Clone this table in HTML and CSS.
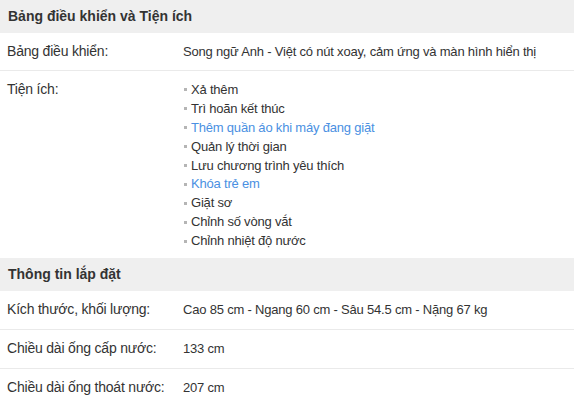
FILE: index.html
```html
<!DOCTYPE html>
<html lang="vi">
<head>
<meta charset="utf-8">
<link rel="stylesheet" href="styles.css">
</head>
<body>
<div class="specs">
  <h3 class="group-title">Bảng điều khiển và Tiện ích</h3>
  <div class="row">
    <div class="label">Bảng điều khiển:</div>
    <div class="value">Song ngữ Anh - Việt có nút xoay, cảm ứng và màn hình hiển thị</div>
  </div>
  <div class="row row-last">
    <div class="label">Tiện ích:</div>
    <ul class="value list">
      <li>Xả thêm</li>
      <li>Trì hoãn kết thúc</li>
      <li class="link">Thêm quần áo khi máy đang giặt</li>
      <li>Quản lý thời gian</li>
      <li>Lưu chương trình yêu thích</li>
      <li class="link">Khóa trẻ em</li>
      <li>Giặt sơ</li>
      <li>Chỉnh số vòng vắt</li>
      <li>Chỉnh nhiệt độ nước</li>
    </ul>
  </div>
  <h3 class="group-title">Thông tin lắp đặt</h3>
  <div class="row row-tall">
    <div class="label">Kích thước, khối lượng:</div>
    <div class="value">Cao 85 cm - Ngang 60 cm - Sâu 54.5 cm - Nặng 67 kg</div>
  </div>
  <div class="row row-tall">
    <div class="label">Chiều dài ống cấp nước:</div>
    <div class="value">133 cm</div>
  </div>
  <div class="row row-tall row-last">
    <div class="label">Chiều dài ống thoát nước:</div>
    <div class="value">207 cm</div>
  </div>
</div>
</body>
</html>
```
FILE: styles.css
```css
* { box-sizing: border-box; }
html, body { margin: 0; padding: 0; background: #fff; }
body {
  font-family: "Liberation Sans", Arial, sans-serif;
  font-size: 13px;
  color: #333;
}
.specs { width: 574px; }
.group-title {
  margin: 0;
  height: 33px;
  line-height: 33px;
  padding-left: 8px;
  background: #efefef;
  font-size: 14px;
  font-weight: bold;
  color: #333;
}
.row {
  display: grid;
  grid-template-columns: 176px 1fr;
  padding: 9px 0 9px 7px;
  line-height: 19px;
  border-bottom: 1px solid #eaeaea;
}
.row-tall { padding-bottom: 10px; }
.row-last { border-bottom: none; padding-bottom: 8px; }
.label { color: #333; font-size: 14px; letter-spacing: -0.2px; }
.value { color: #333; letter-spacing: -0.2px; }
.list { list-style: none; margin: 0; padding: 0; }
.list li {
  display: flex;
  align-items: center;
  height: 18.9px;
}
.list li::before {
  content: "";
  width: 3px;
  height: 3px;
  background: #b5b5b5;
  margin: 1px 4px 0 1px;
  flex: none;
}
.list li.link { color: #4a90e2; }
```
